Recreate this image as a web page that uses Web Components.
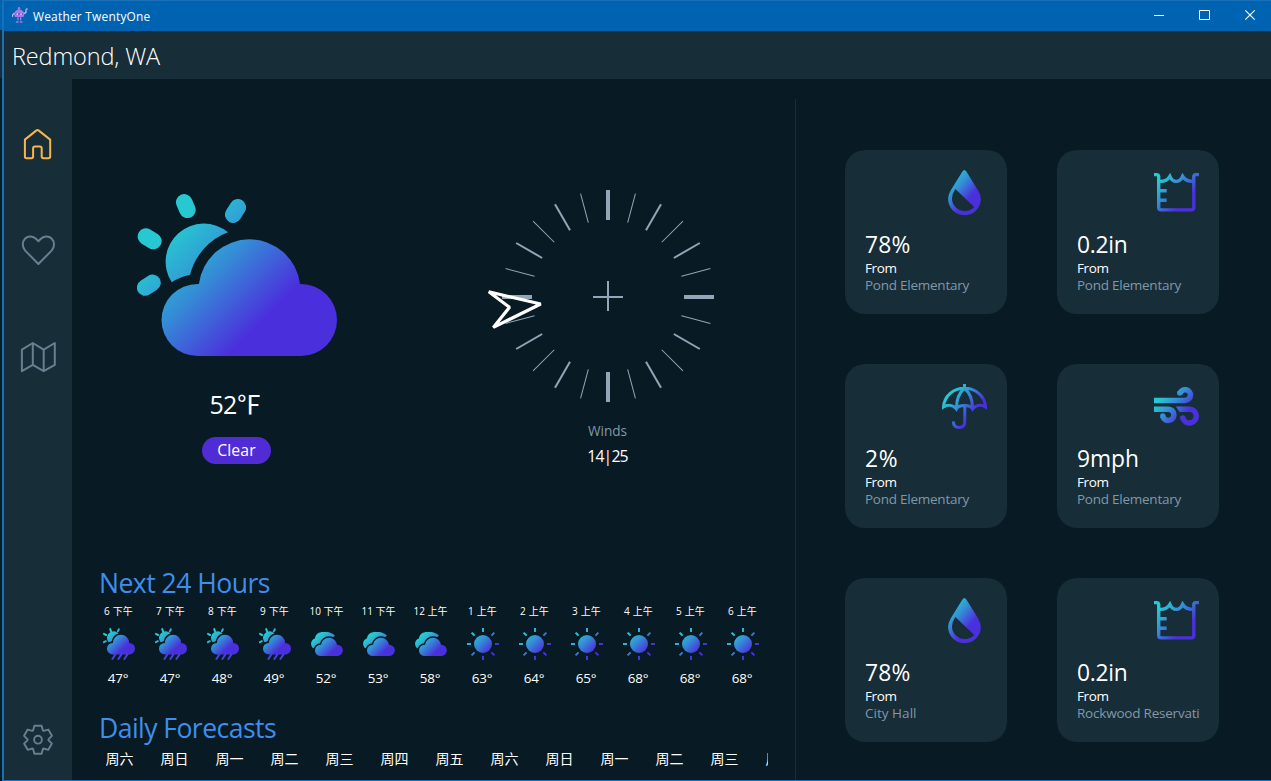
<!DOCTYPE html>
<html lang="zh">
<head>
<meta charset="utf-8">
<title>Weather TwentyOne</title>
<style>
html,body{margin:0;height:100%;background:#081a23;overflow:hidden}
body{font-family:"Open Sans","Noto Sans CJK SC",sans-serif;color:#fff}
</style>
</head>
<body>
<weather-app></weather-app>
<script>
const define = (name, render, after) => customElements.define(name, class extends HTMLElement {
  connectedCallback() {
    if (this.shadowRoot) return;
    const root = this.attachShadow({mode: 'open'});
    root.innerHTML = render(this);
    if (after) after(this, root);
  }
});
const a = (el, n, d = '') => el.getAttribute(n) ?? d;

/* One line of text whose tracking is set so that it spans the given width. */
define('fit-text', el => `<style>
:host{display:block;white-space:pre;font-size:${a(el,'size')}px;line-height:${a(el,'lh')}px;height:${a(el,'lh')}px;width:${a(el,'w')}px}
span{display:inline-block}
</style><span><slot></slot></span>`, (el, root) => {
  const s = root.querySelector('span'), n = [...el.textContent].length;
  s.style.letterSpacing = ((+a(el,'w') - s.getBoundingClientRect().width) / n).toFixed(3) + 'px';
});

const grad = (x1, y1, x2, y2) => `<defs><linearGradient id="g" gradientUnits="userSpaceOnUse" x1="${x1}" y1="${y1}" x2="${x2}" y2="${y2}"><stop stop-color="#27c8d1"/><stop offset=".45" stop-color="#348fd6"/><stop offset="1" stop-color="#4a30dc"/></linearGradient></defs>`;
const CLOUD = 'M197.5 284H198.9A51 51 0 0 1 300.1 284H301A36 36 0 0 1 301 356H197.5A36 36 0 0 1 197.5 284Z';
const CRESCENT = 'M228 232.3A61.5 61.5 0 0 0 190 275A45.6 45.6 0 0 0 171.7 282.3A38.1 38.1 0 0 1 228 232.3Z';

const gear = () => {
  const pts = [];
  for (let i = 0; i < 6; i++) for (const [x, y] of [[-4.9,-9.2],[-3.6,-14],[3.6,-14],[4.9,-9.2]]) {
    const t = i * Math.PI / 3;
    pts.push((38 + x * Math.cos(t) - y * Math.sin(t)).toFixed(2) + ' ' + (739.7 + x * Math.sin(t) + y * Math.cos(t)).toFixed(2));
  }
  return 'M' + pts.join('L') + 'Z';
};

const ICONS = {
  hero: [200, 163, '137 194 200 163', grad(190,213,280,303) + `<g fill="url(#g)"><path d="${CLOUD}"/><path d="${CRESCENT}"/></g><path stroke="url(#g)" stroke-width="16.5" stroke-linecap="round" d="M184.2 202.3L187.4 209.8M237.8 207.3L233.2 214.7M145.9 236.6L153.4 241.1M145.1 287.6L152.5 282.8"/>`],
  rain: [32, 32, '0 0 32 32', grad(6,6,20,21) + `<g fill="url(#g)"><path d="M4 20.6A5.75 5.75 0 0 1 9.8 14.9H9.9A8.15 8.15 0 0 1 26.2 14.9A5.75 5.75 0 0 1 26.3 26.4H9.8A5.75 5.75 0 0 1 4 20.6Z"/><path d="M15.6 5.6A9.9 9.9 0 0 0 8.6 13.2A7.5 7.5 0 0 0 5.6 14.3A6.2 6.2 0 0 1 15.6 5.6Z"/></g><path stroke="url(#g)" stroke-width="2" stroke-linecap="round" d="M7.2 1.1L8 3.4M15.9 1.3L14.8 3.4M1 5.9L3 7M.9 14.2L2.9 13.2"/><path stroke="#4a3fdb" stroke-width="2" stroke-linecap="round" d="M12.4 26.4L9.4 31M18.4 26.4L15.4 31M24.4 26.4L21.4 31"/>`],
  cloud: [32, 32, '0 0 32 32', grad(8,8,22,23) + `<path fill="url(#g)" d="M1.6 19.8A6 6 0 0 1 4 10.2C4.4 6 8 4 12 4H14.5C19.5 4 22.3 6 24 7.6L10 20H1.6Z"/><path fill="url(#g)" stroke="#081a23" stroke-width="3" paint-order="stroke" d="M4 22.4A5.75 5.75 0 0 1 9.8 16.7H10A8.1 8.1 0 0 1 26 16.7A5.7 5.7 0 0 1 26.3 28.1H9.8A5.75 5.75 0 0 1 4 22.4Z"/>`],
  sun: [32, 32, '0 0 32 32', grad(6,6,23,23) + `<circle cx="16" cy="16" r="9" fill="url(#g)"/><path stroke="url(#g)" stroke-width="2" d="M16 0V4M16 28V32M0 16H4M28 16H32M4.6 4.6L7.6 7.6M24.4 24.4L27.4 27.4M4.6 27.4L7.6 24.4M24.4 7.6L27.4 4.6"/>`],
  drop: [45, 45, '0 0 45 45', grad(8,8,29,26) + `<path fill="url(#g)" fill-rule="evenodd" d="M22.4 0Q23.5 0 24.4 1.5L36 20.3Q38.8 25 38.8 29A16.35 16.1 0 0 1 6.1 29Q6.1 25 8.8 20.3L20.4 1.5Q21.3 0 22.4 0ZM13.3 19L32.3 37A12.8 12.8 0 0 1 22.4 41A12.4 12.4 0 0 1 10 28.6Q10 24 13.3 19Z"/>`],
  gauge: [45, 45, '0 0 45 45', grad(8,8,31,31) + `<path fill="none" stroke="url(#g)" stroke-width="3.4" d="M0 4.6H2.5Q4.7 4.6 4.7 6.8V37.5Q4.7 39.9 7.1 39.9H37.4Q39.8 39.9 39.8 37.5V6.8Q39.8 4.6 42 4.6H45M4.7 11.3C10.5 11.9 13.6 10 15.9 6.3C17.5 10 20 11.4 22.3 11.4S27 10 28.6 6.3C31 10 34 11.9 39.8 11.3M5 20.7H12.7M5 30.3H12.7"/>`],
  umbrella: [45, 45, '0 0 45 45', grad(9,9,33,27) + `<path fill="none" stroke="url(#g)" stroke-width="3" d="M22.5 0V4.5M1.5 23C2.2 12 11 4.3 22.5 4.3S42.8 12 43.5 23C39.5 20.4 34 20.6 30.6 25C28.5 20.4 16.5 20.4 14.4 25C11 20.6 5.5 20.4 1.5 23ZM22.3 4.5C16.8 9 14.6 15 14.4 24M22.7 4.5C28.2 9 30.4 15 30.6 24M22.8 21.5V38Q22.8 43.5 17.1 43.5Q11.4 43.5 11.4 37.6"/>`],
  wind: [45, 45, '0 0 45 45', grad(8,12,31,31) + `<g fill="none" stroke="url(#g)" stroke-width="5.5"><path d="M0 16.5H31.1A5.4 5.4 0 1 0 25.9 9.7M0 25.2H14.2A5.65 5.65 0 1 1 8.8 32.3M26 25.2H35.3A6.85 6.85 0 1 1 28.9 34.3"/></g><g fill="url(#g)"><circle cx="25.8" cy="9" r="2.7"/><circle cx="8.8" cy="32" r="2.7"/><circle cx="28.8" cy="34" r="2.7"/><path d="M21.9 22.45H27V27.95H25.4Q23.8 25 21.9 22.45Z"/></g>`],
  home: [36, 36, '20 126 36 36', `<path fill="none" stroke="#f9b548" stroke-width="2" stroke-linejoin="round" d="M33.1 156.5V148.3Q33.1 146.4 35 146.4H39.8Q41.7 146.4 41.7 148.3V156.5Q41.7 158.2 43.4 158.2H48.4Q50.2 158.2 50.2 156.5V139.6L38.5 130.4Q37.5 129.6 36.5 130.4L24.9 139.6V156.5Q24.9 158.2 26.6 158.2H31.4Q33.1 158.2 33.1 156.5Z"/>`],
  heart: [36, 36, '20 232 36 36', `<path fill="none" stroke="#697f8f" stroke-width="2" stroke-linejoin="round" d="M38.4 241.2L36.2 239C33.3 236 28.3 235.4 25.2 238.5C22 241.7 22 247.2 25.2 250.6L38.4 264L51.6 250.6C54.8 247.2 54.8 241.7 51.6 238.5C48.5 235.4 43.5 236 40.6 239Z"/>`],
  map: [36, 36, '20 339 36 36', `<path fill="none" stroke="#697f8f" stroke-width="2" stroke-linejoin="round" d="M21.9 349.6L32.8 343L43.7 349.7L54.8 343V364.9L43.7 371.2L32.8 364.9L21.9 371.2ZM32.8 343V365M43.7 349.7V371"/>`],
  gear: [36, 36, '20 722 36 36', `<path fill="none" stroke="#697f8f" stroke-width="1.9" stroke-linejoin="round" d="${gear()}"/><circle cx="38" cy="739.7" r="3.9" fill="none" stroke="#697f8f" stroke-width="1.9"/>`],
  robot: [18, 18, '11 6 18 18', `<g fill="#a47bea"><circle cx="19" cy="8.3" r="1.2"/><path d="M18.4 9H19.6V11H18.4ZM14 14.6A5.2 5 0 0 1 24.4 14.6L23.4 17H15ZM17.3 17.3H18.6V20.2H17.3ZM20 17.3H21.3V20.2H20ZM16 21.2H18.7V22.8H15.8ZM19.8 21.2H22.5V22.8H19.8Z"/></g><path stroke="#7b4fd0" stroke-width="1.6" d="M15.5 14H23"/><path fill="#fff" d="M16.6 13.5H18V14.7H16.6ZM20.3 13.5H21.7V14.7H20.3Z"/><path fill="none" stroke="#d9cdf5" stroke-width="1.1" d="M14.3 13L12.6 15V16.8M24 13.6L26 12.6V10M25.6 9.6L27.6 8.8"/>`],
};
define('app-icon', el => {
  const [w, h, vb, body] = ICONS[a(el,'name')];
  return `<style>:host{display:block;flex:none;width:${w}px;height:${h}px}svg{display:block}</style><svg width="${w}" height="${h}" viewBox="${vb}">${body}</svg>`;
});

define('title-bar', () => `<style>
:host{display:flex;height:31px;box-sizing:border-box;background:#0063b1;border-top:1px solid #1a70b7;padding-left:7px;align-items:flex-start}
app-icon{margin-top:5px}
fit-text{margin:5px 0 0 4px;flex:none}
svg{margin-left:auto;display:block}
</style><app-icon name="robot"></app-icon><fit-text size="11.9" lh="20" w="117.5">Weather TwentyOne</fit-text>
<svg width="138" height="30" viewBox="1133 1 138 30" fill="none" stroke="#fff"><path d="M1154 15.5H1164M1199.5 10.5H1209.5V19.5H1199.5Z"/><path d="M1245.3 10.3L1254.7 19.7M1254.7 10.3L1245.3 19.7" stroke-width="1.2"/></svg>`);

define('location-header', () => `<style>:host{display:block;height:48px;background:#172d38;box-sizing:border-box;padding:6px 0 0 8px}
fit-text{font-weight:350}</style><fit-text size="23.5" lh="38" w="148">Redmond, WA</fit-text>`);

define('side-nav', () => `<style>:host{display:flex;flex-direction:column;align-items:center;width:68px;background:#172d38;box-sizing:border-box;padding:47px 0 22px;flex:none}
app-icon+app-icon{margin-top:70px}app-icon:nth-of-type(3){margin-top:71px}app-icon:last-of-type{margin-top:auto}</style>
<app-icon name="home"></app-icon><app-icon name="heart"></app-icon><app-icon name="map"></app-icon><app-icon name="gear"></app-icon>`);

define('current-conditions', () => `<style>:host{display:flex;flex-direction:column;width:200px;align-items:center;padding-top:115px;flex:none}
.t{margin:31px 4px 0 0;font-weight:400}
.pill{margin:17px 1px 0 0;width:69px;height:27px;border-radius:14px;background:#512bd4;display:flex;justify-content:center}</style>
<app-icon name="hero"></app-icon><fit-text class="t" size="25" lh="32" w="51">52℉</fit-text>
<div class="pill"><fit-text size="15.8" lh="26" w="38.5">Clear</fit-text></div>`);

define('wind-compass', () => {
  let ticks = '';
  for (let i = 0; i < 24; i++) {
    const w = i % 6 === 0 ? 4 : i % 2 === 0 ? 2 : 1, cy = i === 6 || i === 18 ? 297 : 296;
    ticks += `<path d="M608 ${cy - 106}V${cy - 76}" stroke-width="${w}" transform="rotate(${i * 15} 608 ${cy})"/>`;
  }
  return `<style>:host{display:flex;flex-direction:column;width:244px;align-items:center;padding-top:111px;flex:none}
svg{display:block}.l{margin:19px 1px 0 0;color:#8198a8}.v{margin:5px 1px 0 0}</style>
<svg width="244" height="212" viewBox="486 190 244 212"><g stroke="#91a7b8">${ticks}<path stroke-width="2" d="M593 297H623M608 281V311"/></g><path fill="none" stroke="#fff" stroke-width="3.2" stroke-linejoin="bevel" d="M488.8 291.8L540.7 304L493.3 327.4L509.5 307.3Z"/></svg>
<fit-text class="l" size="13.6" lh="20" w="39">Winds</fit-text><fit-text class="v" size="15.8" lh="20" w="40.5">14|25</fit-text>`;
});

define('section-title', el => `<style>:host{display:block;height:36px;color:#3e8eed;font-weight:400}</style><fit-text size="26.6" lh="36" w="${a(el,'w')}">${el.textContent}</fit-text>`);

define('hour-cell', el => `<style>:host{display:flex;flex-direction:column;align-items:center;width:52px;flex:none}
.h{margin-right:1px}app-icon{margin:10px 0 9px}.t{margin-right:2px}</style>
<fit-text class="h" size="10" lh="14" w="${a(el,'hour').length > 4 ? 34 : 29}">${a(el,'hour')}</fit-text><app-icon name="${a(el,'icon')}"></app-icon><fit-text class="t" size="13.4" lh="18" w="20.5">${a(el,'temp')}</fit-text>`);

const HOURS = [['6 下午','rain',47],['7 下午','rain',47],['8 下午','rain',48],['9 下午','rain',49],['10 下午','cloud',52],['11 下午','cloud',53],['12 上午','cloud',58],['1 上午','sun',63],['2 上午','sun',64],['3 上午','sun',65],['4 上午','sun',68],['5 上午','sun',68],['6 上午','sun',68]];
define('hourly-list', () => `<style>:host{display:flex}</style>` + HOURS.map(([h, i, t]) => `<hour-cell hour="${h}" icon="${i}" temp="${t}°"></hour-cell>`).join(''));

define('daily-list', () => `<style>:host{display:flex;overflow:hidden;font:14px/20px "Noto Sans CJK SC",sans-serif}span{flex:none;width:55px}</style>` + [...'六日一二三四五六日一二三四'].map(d => `<span>周${d}</span>`).join(''));

define('main-pane', () => `<style>:host{display:flex;flex-direction:column;width:723px;flex:none}
.hero{display:flex;gap:149px;padding-left:65px;height:486px;flex:none}
section-title{margin-left:27px}
hourly-list{margin:3px 0 0 21px;height:106px}
daily-list{margin:2px 27px 0 33.5px}</style>
<div class="hero"><current-conditions></current-conditions><wind-compass></wind-compass></div>
<section-title w="171">Next 24 Hours</section-title><hourly-list></hourly-list>
<section-title w="177">Daily Forecasts</section-title><daily-list></daily-list>`);

define('metric-card', el => `<style>:host{display:flex;flex-direction:column;width:162px;height:164px;box-sizing:border-box;padding:20px;border-radius:20px;background:#172d38}
app-icon{align-self:flex-end}.v{margin-top:15px}.f{margin-top:-1px}.p{color:#8198a8;margin-top:-1px}</style>
<app-icon name="${a(el,'icon')}"></app-icon><fit-text class="v" size="22.8" lh="30" w="${a(el,'vw')}">${a(el,'value')}</fit-text><fit-text class="f" size="13.5" lh="18" w="31.5">From</fit-text><fit-text class="p" size="13.5" lh="18" w="${a(el,'pw')}">${a(el,'place')}</fit-text>`);

const CARDS = [['drop','78%',45.5,'Pond Elementary',104],['gauge','0.2in',50.5,'Pond Elementary',104],['umbrella','2%',33.5,'Pond Elementary',104],['wind','9mph',62,'Pond Elementary',104],['drop','78%',45.5,'City Hall',51.5],['gauge','0.2in',50.5,'Rockwood Reservati',122.5]];
define('metric-grid', () => `<style>:host{display:grid;grid-template-columns:162px 162px;grid-auto-rows:164px;gap:50px;align-content:start;padding:51px 0 0 49px;border-left:1px solid #172d38;margin-top:20px;flex:1;box-sizing:border-box}</style>` + CARDS.map(([i, v, vw, p, pw]) => `<metric-card icon="${i}" value="${v}" vw="${vw}" place="${p}" pw="${pw}"></metric-card>`).join(''));

define('weather-app', () => `<style>
:host{display:flex;width:1271px;height:781px;background:#081a23;overflow:hidden}
.edge{width:2px;flex:none;background:linear-gradient(#0063b1 30px,#172d38 30px 78px,#081a23 78px)}
.win{flex:1;box-sizing:border-box;border-left:2px solid #1a70b7;border-bottom:1px solid #1a70b7;display:flex;flex-direction:column;min-width:0}
.body{display:flex;flex:1;min-height:0}</style>
<div class="edge"></div><div class="win"><title-bar></title-bar><location-header></location-header><div class="body"><side-nav></side-nav><main-pane></main-pane><metric-grid></metric-grid></div></div>`);
</script>
</body>
</html>
